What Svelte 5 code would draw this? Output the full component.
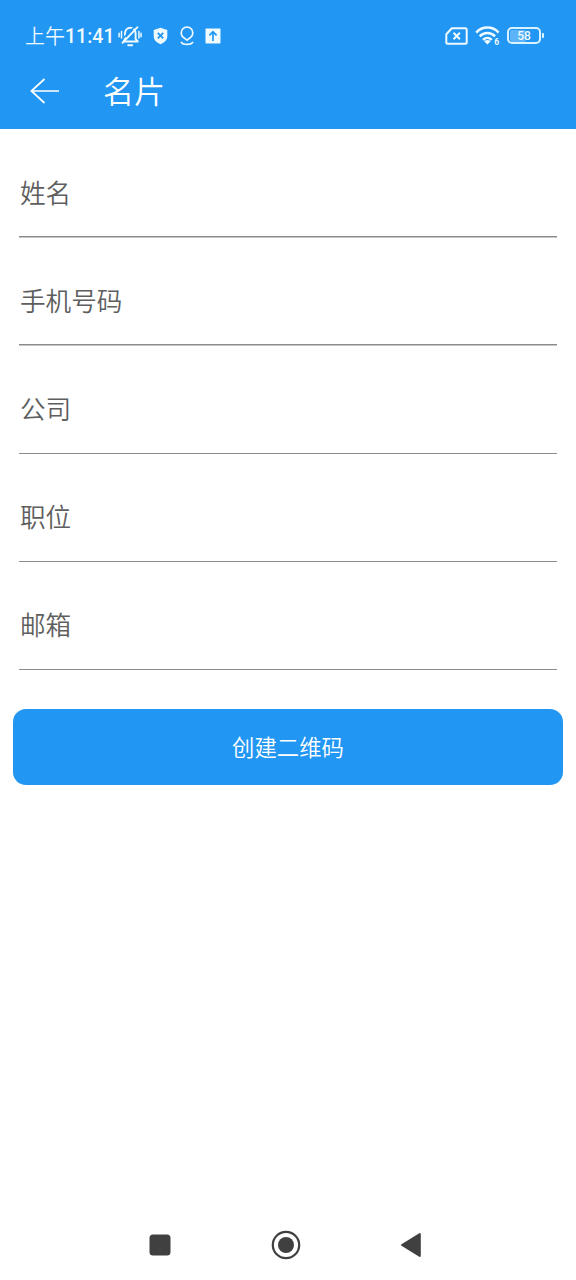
<script lang="ts">
  interface Field {
    name: string;
    label: string;
    type: string;
  }

  const fields: Field[] = [
    { name: "name", label: "姓名", type: "text" },
    { name: "phone", label: "手机号码", type: "tel" },
    { name: "company", label: "公司", type: "text" },
    { name: "position", label: "职位", type: "text" },
    { name: "email", label: "邮箱", type: "email" },
  ];

  const battery = 58;

  let values: Record<string, string> = $state({});
</script>

<div class="screen">
  <header>
    <div class="status-bar">
      <div class="clock"><span class="period">上午</span><b>11:41</b></div>

      <svg class="bell" width="24" height="22" viewBox="0 0 24 22">
        <path d="M5.500 16.500 7 14V8.500C7 5 9.200 2.800 12.300 2.800S17.600 5 17.600 8.500V14l2.200 2.500Z" />
        <path class="gap" d="M3.500 15 16 2.200" />
        <path d="M4.500 17.800 19.500 2.200M10.200 20.200h4" />
        <path d="M3.500 6.500v6.500M1.100 8.300v3.400M20.900 6.500v6.500M23 8.300v3.400" stroke-width="1.500" />
      </svg>

      <svg class="shield" width="15" height="18" viewBox="0 0 15 18">
        <path d="M7.5.8 14.3 3v6c0 4-2.8 6.600-6.800 8.200C3.500 15.600.7 13 .7 9V3Z" fill="#effaff" />
        <path d="m4.800 5.900 5.400 5.400m0-5.400-5.400 5.400" stroke="#2196f3" stroke-width="1.800" />
      </svg>

      <svg class="pin" width="14" height="20" viewBox="0 0 14 20">
        <path d="M7 14.200 3.100 11.100A5.800 5.800 0 1 1 10.900 11.100Z" />
        <path d="M1.200 15.700c1 3.600 10.600 3.600 11.600 0" />
      </svg>

      <svg class="upload" width="16" height="16" viewBox="0 0 16 16">
        <rect x=".5" y=".5" width="15" height="15" rx=".8" fill="#effaff" />
        <path d="M8 13V4M4.400 7.400 8 3.800l3.600 3.600" fill="none" stroke="#2196f3" stroke-width="1.700" />
      </svg>

      <svg class="sim" width="23" height="18" viewBox="0 0 23 18">
        <path d="M6.800 1.300h13.400q1.500 0 1.500 1.500v12.400q0 1.500-1.500 1.500H2.800q-1.500 0-1.500-1.500V7.200Z" stroke-width="2" />
        <path d="m8.500 5.800 6.400 6.400m0-6.400-6.400 6.400" stroke-width="2" />
      </svg>

      <svg class="wifi" width="26" height="20" viewBox="0 0 26 20">
        <path d="M1.200 6.600C7.300-.1 17.500-.1 23.600 6.600M4.700 10.400c4.300-4.500 11.100-4.500 15.400 0M8 13.900c2.600-2.500 6.200-2.500 8.800 0" />
        <path d="m12.400 18.500-3.300-3.200q3.300-2.500 6.600 0Z" fill="#effaff" stroke="none" />
        <circle class="gap" cx="21.800" cy="15.700" r="3.600" />
        <text x="19.300" y="19">6</text>
      </svg>

      <div class="battery">
        <div class="cell">
          <div class="level" style:width="{battery}%"></div>
          <span>{battery}</span>
        </div>
        <i></i>
      </div>
    </div>

    <div class="app-bar">
      <button class="back" aria-label="返回">
        <svg width="32" height="28" viewBox="0 0 32 28">
          <path d="M15.500 2 2.400 14l13.100 12M2.400 14H30" fill="none" stroke="#fff" stroke-width="1.700" />
        </svg>
      </button>
      <h1>名片</h1>
    </div>
  </header>

  <main>
    {#each fields as field (field.name)}
      <label>
        <input
          type={field.type}
          name={field.name}
          placeholder={field.label}
          aria-label={field.label}
          bind:value={values[field.name]}
        />
      </label>
    {/each}
    <button class="submit">创建二维码</button>
  </main>

  <nav>
    <svg width="22" height="22" viewBox="0 0 22 22">
      <rect x=".5" y=".5" width="21" height="21" rx="3.500" />
    </svg>
    <svg width="30" height="30" viewBox="0 0 30 30">
      <circle cx="15" cy="15" r="13.200" fill="none" stroke="#404040" stroke-width="2.200" />
      <circle cx="15" cy="15" r="8" />
    </svg>
    <svg width="22" height="26" viewBox="0 0 22 26">
      <path d="M2 13 19.800 2v22Z" stroke="#404040" stroke-width="2" stroke-linejoin="round" />
    </svg>
  </nav>
</div>

<style>
  :global(body) {
    background: #fff;
  }

  .screen {
    display: flex;
    flex-direction: column;
    height: 1280px;
    background: #fff;
    font-family: "Noto Sans CJK SC", sans-serif;
    font-weight: 350;
  }

  svg {
    display: block;
    flex: none;
  }

  header {
    height: 129px;
    background: #2196f3;
    color: #fff;
  }

  .status-bar {
    display: flex;
    align-items: center;
    box-sizing: border-box;
    height: 54px;
    padding: 17px 32px 0 25px;
    color: #effaff;
    font-family: Roboto, "Noto Sans CJK SC", sans-serif;
  }

  .clock {
    display: flex;
    align-items: center;
    width: 93px;
    padding-top: 2px;
    font-size: 20px;
    line-height: 24px;
    white-space: nowrap;
  }

  .clock b {
    font-size: 19.5px;
    font-weight: 500;
  }

  .bell,
  .pin,
  .sim,
  .wifi {
    fill: none;
    stroke: #effaff;
    stroke-width: 1.7;
  }

  .bell {
    stroke-linecap: round;
    stroke-linejoin: round;
    stroke-width: 1.9;
  }

  .bell .gap {
    stroke: #2196f3;
    stroke-width: 1.6;
  }

  .shield {
    margin-left: 10.5px;
  }

  .pin {
    margin-left: 12px;
  }

  .upload {
    margin-left: 11.5px;
  }

  .sim {
    margin-left: auto;
    stroke-linejoin: round;
  }

  .wifi {
    margin-left: 7px;
    stroke-width: 2.5;
  }

  .wifi .gap {
    fill: #2196f3;
    stroke: none;
  }

  .wifi text {
    fill: #effaff;
    stroke: none;
    font-size: 8.5px;
    font-weight: 700;
  }

  .battery {
    display: flex;
    align-items: center;
    gap: 1px;
    margin-left: 6px;
  }

  .cell {
    display: grid;
    box-sizing: border-box;
    width: 34px;
    height: 17px;
    padding: 1px;
    border: 2px solid #d9f2ff;
    border-radius: 5px;
  }

  .cell > * {
    grid-area: 1 / 1;
  }

  .level {
    border-radius: 2px;
    background: #5cb3f7;
  }

  .cell span {
    font-size: 12px;
    font-weight: 500;
    line-height: 12px;
    text-align: center;
  }

  .battery i {
    width: 2px;
    height: 5px;
    border-radius: 0 1px 1px 0;
    background: #d9f2ff;
  }

  .app-bar {
    display: flex;
    align-items: center;
    box-sizing: border-box;
    height: 75px;
    padding: 0 0 1px 29px;
  }

  .back {
    padding: 0;
    border: 0;
    background: none;
  }

  h1 {
    margin: 0 0 2px 42px;
    font-size: 31px;
    font-weight: 350;
    line-height: 40px;
  }

  main {
    display: flex;
    flex: 1;
    flex-direction: column;
    padding: 18.5px 13px 0;
  }

  label {
    display: flex;
    box-sizing: border-box;
    height: 90.2px;
    margin: 0 6px 18px;
    background: linear-gradient(#8c8c8c, #8c8c8c) bottom / 100% 1.5px no-repeat;
  }

  input {
    flex: 1;
    min-width: 0;
    padding: 0 0 3px 1px;
    border: 0;
    outline: 0;
    background: none;
    color: #212121;
    font: inherit;
    font-size: 25.6px;
  }

  input::placeholder {
    color: #5e5e5e;
    opacity: 1;
  }

  .submit {
    height: 76.5px;
    margin-top: 20.5px;
    padding: 0 0 3px;
    border: 0;
    border-radius: 13px;
    background: #2196f3;
    color: #fff;
    font: inherit;
    font-size: 22.4px;
  }

  nav {
    display: flex;
    align-items: center;
    justify-content: space-between;
    height: 70px;
    padding: 0 154px 0 149px;
    fill: #404040;
  }
</style>
